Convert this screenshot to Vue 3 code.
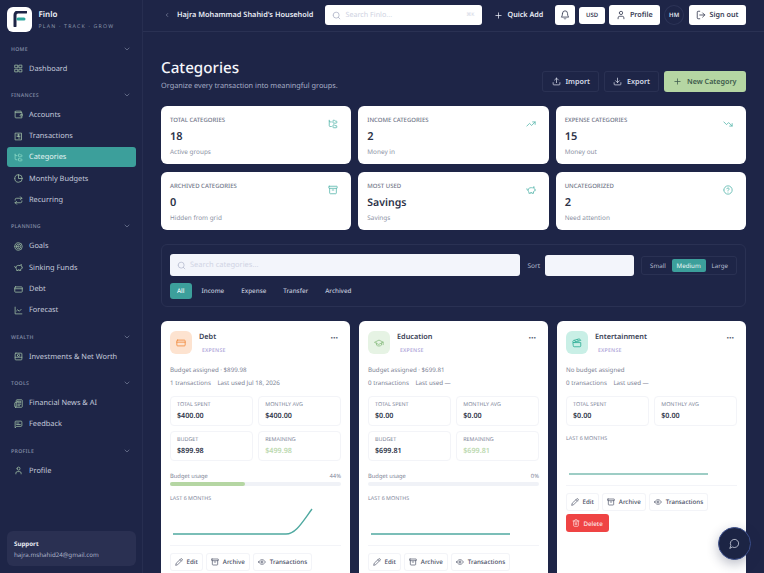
<script setup>
import { h } from 'vue'

const c = (x, y, r) => `M${x - r} ${y}a${r} ${r} 0 1 0 ${r * 2} 0a${r} ${r} 0 1 0 ${-r * 2} 0`
const icons = {
  grid: ['M3 3h7v7H3z', 'M14 3h7v7h-7z', 'M14 14h7v7h-7z', 'M3 14h7v7H3z'],
  wallet: ['M21 12V7H5a2 2 0 0 1 0-4h14v4', 'M3 5v14a2 2 0 0 0 2 2h16v-5', 'M18 12a2 2 0 0 0 0 4h4v-4Z'],
  receipt: ['M4 3h16v18H4z', 'M8 8h8', 'M8 12h8', 'M12 16h4', 'M12 6v6'],
  tree: ['M20 10a1 1 0 0 0 1-1V6a1 1 0 0 0-1-1h-2.5a1 1 0 0 1-.8-.4l-.9-1.2A1 1 0 0 0 15 3h-2a1 1 0 0 0-1 1v5a1 1 0 0 0 1 1Z', 'M20 21a1 1 0 0 0 1-1v-3a1 1 0 0 0-1-1h-2.9a1 1 0 0 1-.88-.55l-.42-.85a1 1 0 0 0-.92-.6H13a1 1 0 0 0-1 1v5a1 1 0 0 0 1 1Z', 'M3 5a2 2 0 0 0 2 2h3', 'M3 3v13a2 2 0 0 0 2 2h3'],
  pie: [c(12, 12, 10), 'M12 2v10h10'],
  repeat: ['m17 2 4 4-4 4', 'M3 11v-1a4 4 0 0 1 4-4h14', 'm7 22-4-4 4-4', 'M21 13v1a4 4 0 0 1-4 4H3'],
  goal: [c(12, 12, 10), c(12, 12, 6), c(12, 12, 2)],
  piggy: ['M19 5c-1.5 0-2.8 1.4-3 2-3.5-1.5-11-.3-11 5 0 1.8 0 3 2 4.5V20h4v-2h3v2h4v-4c1-.5 1.7-1 2-2h2v-4h-2c0-1-.5-1.5-1-2V5z', 'M2 9v1c0 1.1.9 2 2 2h1'],
  card: ['M4 5h16a2 2 0 0 1 2 2v10a2 2 0 0 1-2 2H4a2 2 0 0 1-2-2V7a2 2 0 0 1 2-2z', 'M2 10h20'],
  chart: ['M3 3v18h18', 'm19 9-5 5-4-4-3 3'],
  invest: ['M5 3h14a2 2 0 0 1 2 2v14a2 2 0 0 1-2 2H5a2 2 0 0 1-2-2V5a2 2 0 0 1 2-2z', 'M3 14h18', c(12, 9, 3)],
  news: ['M4 22h16a2 2 0 0 0 2-2V4a2 2 0 0 0-2-2H8a2 2 0 0 0-2 2v16a2 2 0 0 1-2 2Zm0 0a2 2 0 0 1-2-2v-9c0-1.1.9-2 2-2h2', 'M18 14h-8', 'M15 18h-5', 'M10 6h8v4h-8V6Z'],
  feedback: ['M21 15a2 2 0 0 1-2 2H7l-4 4V5a2 2 0 0 1 2-2h14a2 2 0 0 1 2 2z', 'M13 8H7', 'M17 12H7'],
  user: ['M19 21v-2a4 4 0 0 0-4-4H9a4 4 0 0 0-4 4v2', c(12, 7, 4)],
  chevron: ['m6 9 6 6 6-6'],
  back: ['m15 18-6-6 6-6'],
  search: [c(11, 11, 8), 'm21 21-4.3-4.3'],
  bell: ['M6 8a6 6 0 0 1 12 0c0 7 3 9 3 9H3s3-2 3-9', 'M10.3 21a1.94 1.94 0 0 0 3.4 0'],
  logout: ['M9 21H5a2 2 0 0 1-2-2V5a2 2 0 0 1 2-2h4', 'm16 17 5-5-5-5', 'M21 12H9'],
  plus: ['M5 12h14', 'M12 5v14'],
  upload: ['M21 15v4a2 2 0 0 1-2 2H5a2 2 0 0 1-2-2v-4', 'm17 8-5-5-5 5', 'M12 3v12'],
  download: ['M21 15v4a2 2 0 0 1-2 2H5a2 2 0 0 1-2-2v-4', 'm7 10 5 5 5-5', 'M12 15V3'],
  up: ['m22 7-8.5 8.5-5-5L2 17', 'M16 7h6v6'],
  down: ['m22 17-8.5-8.5-5 5L2 7', 'M16 17h6v-6'],
  archive: ['M3 3h18a1 1 0 0 1 1 1v3a1 1 0 0 1-1 1H3a1 1 0 0 1-1-1V4a1 1 0 0 1 1-1z', 'M4 8v11a2 2 0 0 0 2 2h12a2 2 0 0 0 2-2V8', 'M10 12h4'],
  help: [c(12, 12, 10), 'M9.09 9a3 3 0 0 1 5.83 1c0 2-3 3-3 3', 'M12 17h.01'],
  pencil: ['M17 3a2.85 2.83 0 1 1 4 4L7.5 20.5 2 22l1.5-5.5Z', 'm15 5 4 4'],
  eye: ['M2 12s3-7 10-7 10 7 10 7-3 7-10 7-10-7-10-7Z', c(12, 12, 3)],
  trash: ['M3 6h18', 'M19 6v14c0 1-1 2-2 2H7c-1 0-2-1-2-2V6', 'M8 6V4c0-1 1-2 2-2h4c1 0 2 1 2 2v2', 'M10 11v6', 'M14 11v6'],
  cap: ['M22 10v6', 'M2 10l10-5 10 5-10 5z', 'M6 12v5c3 3 9 3 12 0v-5'],
  clapper: ['M20.2 6 3 11l-.9-2.4c-.3-1.1.3-2.2 1.3-2.5l13.5-4c1.1-.3 2.2.3 2.5 1.3Z', 'm6.2 5.3 3.1 3.9', 'm12.4 3.4 3.1 4', 'M3 11h18v8a2 2 0 0 1-2 2H5a2 2 0 0 1-2-2Z'],
  chat: ['M7.9 20A9 9 0 1 0 4 16.1L2 22Z'],
}

const Icon = (props) =>
  h(
    'svg',
    { width: props.size || 9, height: props.size || 9, viewBox: '0 0 24 24', fill: 'none', stroke: 'currentColor', 'stroke-width': props.sw || 2, 'stroke-linecap': 'round', 'stroke-linejoin': 'round' },
    icons[props.name].map((d) => h('path', { d })),
  )
Icon.props = ['name', 'size', 'sw']

const nav = [
  { title: 'HOME', items: [{ label: 'Dashboard', icon: 'grid' }] },
  {
    title: 'FINANCES',
    items: [
      { label: 'Accounts', icon: 'wallet' },
      { label: 'Transactions', icon: 'receipt' },
      { label: 'Categories', icon: 'tree', active: true },
      { label: 'Monthly Budgets', icon: 'pie' },
      { label: 'Recurring', icon: 'repeat' },
    ],
  },
  {
    title: 'PLANNING',
    items: [
      { label: 'Goals', icon: 'goal' },
      { label: 'Sinking Funds', icon: 'piggy' },
      { label: 'Debt', icon: 'card' },
      { label: 'Forecast', icon: 'chart' },
    ],
  },
  { title: 'WEALTH', items: [{ label: 'Investments & Net Worth', icon: 'invest' }] },
  {
    title: 'TOOLS',
    items: [
      { label: 'Financial News & AI', icon: 'news' },
      { label: 'Feedback', icon: 'feedback' },
    ],
  },
  { title: 'PROFILE', items: [{ label: 'Profile', icon: 'user' }] },
]

const stats = [
  { label: 'TOTAL CATEGORIES', value: '18', note: 'Active groups', icon: 'tree' },
  { label: 'INCOME CATEGORIES', value: '2', note: 'Money in', icon: 'up' },
  { label: 'EXPENSE CATEGORIES', value: '15', note: 'Money out', icon: 'down' },
  { label: 'ARCHIVED CATEGORIES', value: '0', note: 'Hidden from grid', icon: 'archive' },
  { label: 'MOST USED', value: 'Savings', note: 'Savings', icon: 'piggy' },
  { label: 'UNCATEGORIZED', value: '2', note: 'Need attention', icon: 'help' },
]

const tabs = ['All', 'Income', 'Expense', 'Transfer', 'Archived']
const sizes = ['Small', 'Medium', 'Large']

const cards = [
  {
    name: 'Debt', icon: 'card', tint: '#fde3d0', ink: '#f08a3c',
    assigned: 'Budget assigned · $899.98', tx: '1 transactions', used: 'Last used Jul 18, 2026',
    spent: '$400.00', avg: '$400.00', budget: '$899.98', remaining: '$499.98', usage: 44,
    line: 'M3 30H116C126 30 133 17 142 5', stroke: '#4fa9a0',
  },
  {
    name: 'Education', icon: 'cap', tint: '#e6f3e4', ink: '#8ebf86',
    assigned: 'Budget assigned · $699.81', tx: '0 transactions', used: 'Last used —',
    spent: '$0.00', avg: '$0.00', budget: '$699.81', remaining: '$699.81', usage: 0,
    line: 'M3 30H142', stroke: '#4fa9a0',
  },
  {
    name: 'Entertainment', icon: 'clapper', tint: '#c9efe6', ink: '#2fae96',
    assigned: 'No budget assigned', tx: '0 transactions', used: 'Last used —',
    spent: '$0.00', avg: '$0.00', line: 'M3 30H142', stroke: '#7dbcb2', canDelete: true,
  },
]
</script>

<template>
  <div class="app">
    <aside class="sidebar">
      <div class="brand">
        <div class="logo">
          <svg width="14" height="16" viewBox="0 0 14 16">
            <path d="M2 15V4a3 3 0 0 1 3-3h8" fill="none" stroke="#1e2547" stroke-width="3" stroke-linecap="round" />
            <path d="M5 8h6" fill="none" stroke="#2fa79f" stroke-width="3" stroke-linecap="round" />
          </svg>
        </div>
        <div>
          <div class="brand-name">Finlo</div>
          <div class="brand-tag">PLAN · TRACK · GROW</div>
        </div>
      </div>

      <nav class="nav">
        <div v-for="group in nav" :key="group.title" class="nav-group">
          <div class="nav-title">
            <span>{{ group.title }}</span>
            <Icon name="chevron" :size="8" />
          </div>
          <div
            v-for="item in group.items"
            :key="item.label"
            class="nav-item"
            :class="{ active: item.active }"
          >
            <Icon :name="item.icon" :size="9" class="nav-icon" />
            <span>{{ item.label }}</span>
          </div>
        </div>
      </nav>

      <div class="support">
        <div class="support-title">Support</div>
        <div class="support-mail">hajra.mshahid24@gmail.com</div>
      </div>
    </aside>

    <div class="main">
      <header class="topbar">
        <Icon name="back" :size="6" class="back" />
        <span class="household">Hajra Mohammad Shahid's Household</span>
        <div class="top-search">
          <Icon name="search" :size="9" />
          <span class="top-search-text">Search Finlo...</span>
          <span class="kbd">⌘K</span>
        </div>
        <button class="quick"><Icon name="plus" :size="9" /> Quick Add</button>
        <button class="white-btn bell"><Icon name="bell" :size="10" /></button>
        <button class="white-btn usd">USD</button>
        <button class="white-btn"><Icon name="user" :size="10" /> Profile</button>
        <div class="avatar">HM</div>
        <button class="white-btn"><Icon name="logout" :size="10" /> Sign out</button>
      </header>

      <main class="content">
        <div class="page-head">
          <div class="titles">
            <h1>Categories</h1>
            <p>Organize every transaction into meaningful groups.</p>
          </div>
          <div class="page-actions">
            <button class="ghost"><Icon name="upload" :size="9" /> Import</button>
            <button class="ghost"><Icon name="download" :size="9" /> Export</button>
            <button class="primary"><Icon name="plus" :size="9" /> New Category</button>
          </div>
        </div>

        <section class="stats">
          <div v-for="s in stats" :key="s.label" class="stat">
            <div class="stat-top">
              <span class="stat-label">{{ s.label }}</span>
              <Icon :name="s.icon" :size="10" class="stat-icon" />
            </div>
            <div class="stat-value" :class="{ big: s.value.length > 2 }">{{ s.value }}</div>
            <div class="stat-note">{{ s.note }}</div>
          </div>
        </section>

        <section class="filters">
          <div class="filter-row">
            <div class="filter-search">
              <Icon name="search" :size="9" />
              <span>Search categories...</span>
            </div>
            <span class="sort-label">Sort</span>
            <div class="sort-box"></div>
            <div class="size-group">
              <span v-for="s in sizes" :key="s" class="size" :class="{ on: s === 'Medium' }">{{ s }}</span>
            </div>
          </div>
          <div class="tabs">
            <span v-for="t in tabs" :key="t" class="tab" :class="{ on: t === 'All' }">{{ t }}</span>
          </div>
        </section>

        <section class="cards">
          <article v-for="card in cards" :key="card.name" class="card">
            <div class="card-head">
              <div class="card-icon" :style="{ background: card.tint, color: card.ink }">
                <Icon :name="card.icon" :size="10" />
              </div>
              <div class="card-name">
                <div class="name">{{ card.name }}</div>
                <div class="kind">EXPENSE</div>
              </div>
              <span class="more">···</span>
            </div>
            <div class="line-text">{{ card.assigned }}</div>
            <div class="line-text tx">
              <span>{{ card.tx }}</span>
              <span>{{ card.used }}</span>
            </div>

            <div class="tiles">
              <div class="tile"><span>TOTAL SPENT</span><b>{{ card.spent }}</b></div>
              <div class="tile"><span>MONTHLY AVG</span><b>{{ card.avg }}</b></div>
              <div v-if="card.budget" class="tile"><span>BUDGET</span><b>{{ card.budget }}</b></div>
              <div v-if="card.budget" class="tile"><span>REMAINING</span><b class="left">{{ card.remaining }}</b></div>
            </div>

            <template v-if="card.budget">
              <div class="usage">
                <span>Budget usage</span>
                <span>{{ card.usage }}%</span>
              </div>
              <div class="bar"><div class="bar-fill" :style="{ width: card.usage + '%' }"></div></div>
            </template>

            <div class="spark-title">LAST 6 MONTHS</div>
            <svg class="spark" width="171" height="40" viewBox="0 0 171 40">
              <path :d="card.line" fill="none" :stroke="card.stroke" stroke-width="1.4" />
            </svg>

            <div class="actions">
              <button><Icon name="pencil" :size="8" /> Edit</button>
              <button><Icon name="archive" :size="8" /> Archive</button>
              <button><Icon name="eye" :size="8" /> Transactions</button>
              <button v-if="card.canDelete" class="delete"><Icon name="trash" :size="8" /> Delete</button>
            </div>
          </article>
        </section>
      </main>
    </div>

    <button class="fab"><Icon name="chat" :size="11" :sw="1.6" /></button>
  </div>
</template>

<style>
body {
  background: #1e2547;
}
</style>

<style scoped>
.app {
  display: flex;
  height: 100vh;
  overflow: hidden;
  background: #1e2547;
  font-family: "Noto Sans", sans-serif;
  text-rendering: geometricPrecision;
  color: #2c3247;
}

button {
  font-family: inherit;
  text-rendering: inherit;
  border: none;
  cursor: pointer;
}

.sidebar {
  width: 143px;
  flex-shrink: 0;
  display: flex;
  flex-direction: column;
  border-right: 1px solid #272e50;
  box-sizing: border-box;
  padding: 7px 6px 7px 7px;
}

.brand {
  display: flex;
  align-items: center;
  gap: 6.5px;
  height: 24px;
}

.logo {
  width: 25px;
  height: 25px;
  border-radius: 6px;
  background: #fff;
  display: flex;
  align-items: center;
  justify-content: center;
}

.brand-name {
  color: #f2f4fa;
  font-size: 8px;
  font-weight: 600;
  line-height: 11px;
}

.brand-tag {
  color: #8d98ab;
  font-size: 5.2px;
  letter-spacing: 1.2px;
  line-height: 8px;
  margin-top: 2px;
}

.nav {
  margin-top: 10px;
  display: flex;
  flex-direction: column;
  gap: 7.6px;
  flex: 1;
}

.nav-title {
  display: flex;
  justify-content: space-between;
  align-items: center;
  height: 15px;
  padding: 0 5px 0 4px;
  color: #7d86a0;
  font-size: 5.2px;
  font-weight: 600;
  letter-spacing: 0.3px;
  margin-bottom: 2.5px;
}

.nav-item {
  display: flex;
  align-items: center;
  gap: 6px;
  height: 20px;
  margin-bottom: 1.3px;
  padding-left: 7px;
  border-radius: 3px;
  color: #c4cadc;
  font-size: 7.4px;
}

.nav-icon {
  color: #a4c4a8;
}

.nav-item.active {
  background: #3c9f9b;
  color: #e8f5f4;
}

.nav-item.active .nav-icon {
  color: #8fdcc8;
}

.support {
  height: 35px;
  border-radius: 6px;
  background: #2a3052;
  padding: 8px 7px;
  box-sizing: border-box;
}

.support-title {
  color: #e8eaf2;
  font-size: 6.2px;
  font-weight: 700;
  line-height: 9px;
}

.support-mail {
  color: #a9b0c8;
  font-size: 6.2px;
  line-height: 9px;
  margin-top: 2px;
}

.main {
  flex: 1;
  min-width: 0;
  display: flex;
  flex-direction: column;
}

.topbar {
  height: 32px;
  flex-shrink: 0;
  box-sizing: border-box;
  border-bottom: 1px solid #2a3153;
  display: flex;
  align-items: center;
  padding: 0 18px 1px 21px;
  color: #e9ecf5;
}

.back {
  color: #aab1c8;
  margin-right: 7px;
}

.household {
  font-size: 7.35px;
  font-weight: 600;
  white-space: nowrap;
  margin-right: 12px;
}

.top-search {
  width: 157px;
  height: 20px;
  box-sizing: border-box;
  background: #fff;
  border-radius: 3px;
  display: flex;
  align-items: center;
  gap: 4px;
  padding: 0 8px 0 7px;
  color: #a9afc4;
  font-size: 7.2px;
  flex-shrink: 0;
}

.top-search-text {
  flex: 1;
  color: #ced2e2;
}

.kbd {
  font-size: 5px;
  color: #cfd3df;
}

.quick {
  background: none;
  color: #e9ecf5;
  font-size: 7.2px;
  font-weight: 600;
  display: flex;
  align-items: center;
  gap: 4px;
  margin: 0 11.5px 0 12px;
  padding: 0;
  white-space: nowrap;
}

.white-btn {
  background: #fff;
  color: #3a4056;
  height: 20px;
  padding: 0 7.5px;
  border-radius: 3px;
  font-size: 7.2px;
  font-weight: 600;
  display: flex;
  align-items: center;
  gap: 3.5px;
  white-space: nowrap;
}

.bell {
  width: 20px;
  padding: 0;
  justify-content: center;
}

.usd {
  height: 17px;
  width: 26px;
  padding: 0;
  justify-content: center;
  font-size: 6px;
  margin: 0 4px 0 4.5px;
}

.avatar {
  width: 20px;
  height: 20px;
  margin: 0 4.5px 0 4px;
  border-radius: 50%;
  border: 1px solid #2c3356;
  box-sizing: border-box;
  display: flex;
  align-items: center;
  justify-content: center;
  font-size: 6px;
  font-weight: 600;
  color: #e3e6f0;
}

.content {
  flex: 1;
  overflow: hidden;
  padding: 19px 18px 0;
  box-sizing: border-box;
}

.page-head {
  display: flex;
  justify-content: space-between;
  align-items: flex-end;
  height: 42px;
}

.titles {
  padding-bottom: 1.5px;
}

h1 {
  margin: 0;
  color: #f5f6fb;
  font-size: 15.2px;
  font-weight: 500;
  line-height: 22px;
}

p {
  margin: 2px 0 0;
  color: #a7aec6;
  font-size: 7.3px;
  line-height: 11px;
}

.page-actions {
  display: flex;
  gap: 4.5px;
  margin-bottom: 1px;
}

.page-actions button {
  height: 21px;
  display: flex;
  align-items: center;
  gap: 4.5px;
  padding: 0 9.5px;
  border-radius: 3px;
  font-size: 7.2px;
  font-weight: 600;
}

.ghost {
  background: #1e2547;
  color: #d6dae8;
  box-shadow: inset 0 0 0 1px #2a3153;
}

.primary {
  background: #b5d6a3;
  color: #3d5a4c;
}

.stats {
  display: grid;
  grid-template-columns: repeat(3, 1fr);
  gap: 8px 7px;
  margin-top: 13px;
}

.stat {
  background: #fff;
  border-radius: 6px;
  height: 58px;
  padding: 10px 9px 0;
  box-sizing: border-box;
}

.stat-top {
  display: flex;
  justify-content: space-between;
  align-items: flex-start;
  height: 14px;
}

.stat-label {
  color: #6f7587;
  font-size: 6px;
  font-weight: 500;
  line-height: 8px;
}

.stat-icon {
  color: #5cb8ae;
  margin: 3px 4px 0 0;
}

.stat-value {
  color: #2c3247;
  font-size: 11px;
  font-weight: 600;
  line-height: 14px;
}

.stat-value.big {
  font-size: 10.5px;
}

.stat-note {
  color: #8c92a4;
  font-size: 6.4px;
  line-height: 9px;
  margin-top: 3px;
}

.filters {
  margin-top: 14px;
  height: 63px;
  box-sizing: border-box;
  border: 1px solid #2a3153;
  border-radius: 6px;
  padding: 9px 8px;
}

.filter-row {
  display: flex;
  align-items: center;
}

.filter-search {
  flex: 1;
  height: 22px;
  background: #f3f5fb;
  border-radius: 3px;
  display: flex;
  align-items: center;
  gap: 4px;
  padding: 0 7px;
  color: #b4b9cd;
  font-size: 7.5px;
}

.filter-search span {
  color: #d0d4e4;
}

.sort-label {
  color: #b6bcd0;
  font-size: 6.5px;
  margin: 0 5px 0 7px;
}

.sort-box {
  width: 89px;
  height: 21px;
  background: #f3f5fb;
  border-radius: 3px;
}

.size-group {
  display: flex;
  align-items: center;
  justify-content: space-between;
  width: 96px;
  margin-left: 7px;
  height: 19px;
  padding: 0 3px;
  border: 1px solid #2a3153;
  border-radius: 3px;
  box-sizing: border-box;
}

.size {
  color: #b6bcd0;
  font-size: 6.2px;
  padding: 0 5px;
  height: 13px;
  line-height: 13px;
  border-radius: 2px;
}

.size.on {
  background: #3c9f9b;
  color: #e8f5f4;
}

.tabs {
  display: flex;
  gap: 3px;
  margin-top: 7px;
}

.tab {
  color: #c4cadc;
  font-size: 6.3px;
  font-weight: 500;
  height: 16px;
  line-height: 16px;
  padding: 0 7px;
  border-radius: 3px;
}

.tab.on {
  background: #3c9f9b;
  color: #f2fafa;
}

.cards {
  display: grid;
  grid-template-columns: repeat(3, 1fr);
  gap: 9px;
  margin-top: 14px;
}

.card {
  background: #fff;
  border-radius: 6px;
  padding: 10px 9px;
  height: 280px;
  box-sizing: border-box;
}

.card-head {
  display: flex;
  align-items: flex-start;
  height: 23px;
}

.card-icon {
  width: 22px;
  height: 23px;
  border-radius: 6px;
  display: flex;
  align-items: center;
  justify-content: center;
}

.card-name {
  flex: 1;
  margin-left: 7px;
}

.name {
  color: #383e54;
  font-size: 7.3px;
  font-weight: 600;
  line-height: 12px;
}

.kind {
  color: #b2a9da;
  font-size: 5.2px;
  font-weight: 600;
  letter-spacing: 0.2px;
  line-height: 8px;
  margin: 3px 0 0 3px;
}

.more {
  color: #4a5065;
  font-size: 9px;
  font-weight: 700;
  line-height: 14px;
  margin-right: 3px;
}

.line-text {
  color: #7e8496;
  font-size: 6.2px;
  line-height: 9px;
  margin-top: 10.5px;
}

.line-text.tx {
  display: flex;
  gap: 6.5px;
  margin-top: 4px;
}

.tiles {
  display: grid;
  grid-template-columns: 1fr 1fr;
  gap: 5.5px;
  margin-top: 9.5px;
}

.tile {
  height: 29.5px;
  box-sizing: border-box;
  border: 1px solid #f3f4f8;
  border-radius: 4px;
  padding: 4px 6px;
}

.tile span {
  display: block;
  color: #80869a;
  font-size: 5.4px;
  line-height: 7px;
}

.tile b {
  display: block;
  color: #2f3549;
  font-size: 7.2px;
  font-weight: 600;
  line-height: 10px;
  margin-top: 2.5px;
}

.tile b.left {
  color: #bcd9b0;
}

.usage {
  display: flex;
  justify-content: space-between;
  color: #7e8496;
  font-size: 5.8px;
  line-height: 8px;
  margin-top: 11px;
}

.bar {
  height: 4px;
  border-radius: 2px;
  background: #f0f2f7;
  margin-top: 2px;
}

.bar-fill {
  height: 100%;
  border-radius: 2px;
  background: #b5d6a3;
}

.spark-title {
  color: #80869a;
  font-size: 5.4px;
  line-height: 7px;
  margin-top: 9.5px;
}

.spark {
  display: block;
  margin-top: 1.5px;
}

.actions {
  border-top: 1px solid #f3f4f8;
  margin-top: 1px;
  padding-top: 7px;
  display: flex;
  flex-wrap: wrap;
  gap: 3.5px;
}

.actions button {
  height: 18px;
  padding: 0 5px;
  background: #fff;
  border-radius: 3px;
  box-shadow: inset 0 0 0 1px #f3f4f8;
  color: #4a5065;
  font-size: 6.2px;
  font-weight: 500;
  display: flex;
  align-items: center;
  gap: 3.5px;
}

.actions button.delete {
  background: #ef4444;
  color: #fde8e8;
  box-shadow: none;
  height: 18px;
  padding: 0 6px;
}

.fab {
  position: fixed;
  right: 13px;
  bottom: 13px;
  width: 33px;
  height: 33px;
  border-radius: 50%;
  background: #1c2444;
  border: 1px solid #3a4d8a;
  color: #dfe3ef;
  display: flex;
  align-items: center;
  justify-content: center;
  padding: 0;
  box-shadow: 0 4px 12px rgba(30, 37, 71, 0.3);
}
</style>
